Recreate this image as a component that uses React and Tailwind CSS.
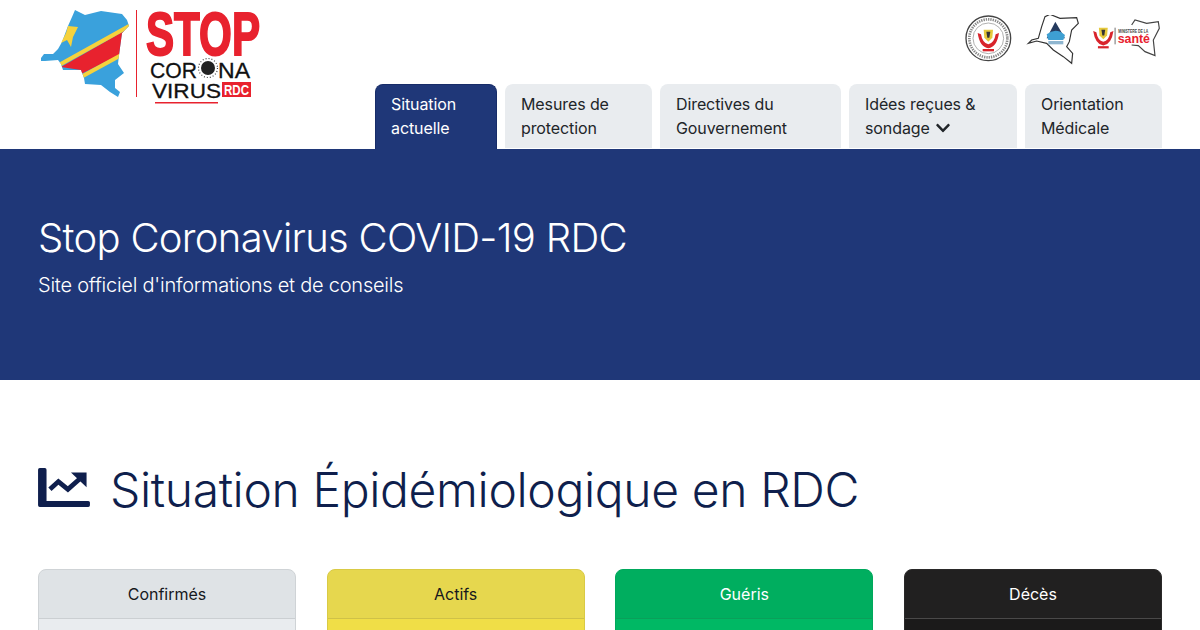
import React from "react";
import { FaChevronDown } from "react-icons/fa";

const MAP = "M6 53 L9 49 L18 49 L23 44 L27 37 L33 21 L37 12 L40 5 L50 10 L66 6 L87 9 L92 15 L94 21 L87 28 L84 50 L83 59 L89 68 L80 75 L80 83 L85 87 L83 92 L75 87 L66 80 L50 79 L49 73 L46 65 L28 65 L26 59 L23 55 L10 56 L6 56 Z";

function MainLogo() {
  return (
    <svg width="230" height="105" viewBox="0 0 230 105" className="block shrink-0" style={{ fontFamily: "'Liberation Sans', sans-serif" }}>
      <defs>
        <clipPath id="drc"><path d={MAP} /></clipPath>
      </defs>
      <path d={MAP} fill="#3aa1dc" />
      <g clipPath="url(#drc)">
        <path d="M26 62 L96 22 L96 44 L46 69 L46 65 Z" fill="#e8222e" />
        <path d="M24 60 L96 20" stroke="#f6d23c" strokeWidth="4" />
        <path d="M46 72 L90 48" stroke="#f6d23c" strokeWidth="4" />
      </g>
      <path d="M33 21 L43 22 L38 32 L36 42 L32 35 L26 38 L31 28 Z" fill="#f6d23c" />
      <rect x="101" y="5" width="1" height="87" fill="#e8222e" />
      <text x="111" y="50" fontSize="61" fontWeight="700" fill="#e8222e" stroke="#e8222e" strokeWidth="2" textLength="114" lengthAdjust="spacingAndGlyphs">STOP</text>
      <text x="115" y="73" fontSize="22" fill="#111" stroke="#111" strokeWidth="0.3" textLength="47" lengthAdjust="spacingAndGlyphs">COR</text>
      <circle cx="173" cy="63" r="7" fill="#222" />
      <circle cx="173" cy="63" r="9.5" fill="none" stroke="#444" strokeWidth="1.2" strokeDasharray="1 2" />
      <text x="183" y="73" fontSize="22" fill="#111" stroke="#111" strokeWidth="0.3" textLength="32" lengthAdjust="spacingAndGlyphs">NA</text>
      <text x="117" y="93" fontSize="21" fill="#111" stroke="#111" strokeWidth="0.3" textLength="69" lengthAdjust="spacingAndGlyphs">VIRUS</text>
      <rect x="187" y="77" width="29" height="15" fill="#e8222e" />
      <text x="189" y="90" fontSize="14" fontWeight="700" fill="#fff" textLength="25" lengthAdjust="spacingAndGlyphs">RDC</text>
      <rect x="120" y="97" width="63" height="1.5" fill="#e8222e" />
    </svg>
  );
}

function Emblem() {
  return (
    <g>
      <path d="M-32 -18 Q-26 24 0 28 Q26 24 32 -18 L22 -14 Q18 12 0 16 Q-18 12 -22 -14 Z" fill="#d8242c" />
      <path d="M-14 -28 L14 -28 L12 -4 L0 8 L-12 -4 Z" fill="#e6c93c" />
      <path d="M-6 -22 L6 -22 L3 -4 L-3 -4 Z" fill="#333" />
      <rect x="-17" y="30" width="34" height="7" fill="#d8242c" />
    </g>
  );
}

function PartnerLogos() {
  return (
    <svg width="200" height="60" viewBox="0 0 200 60" className="block shrink-0" style={{ fontFamily: "'Liberation Sans', sans-serif" }}>
      <g transform="translate(-14 -10) scale(0.3333)">
        <circle cx="115" cy="100" r="67" fill="#fff" stroke="#444" strokeWidth="4" />
        <circle cx="115" cy="100" r="57" fill="none" stroke="#888" strokeWidth="8" strokeDasharray="4 3" />
        <circle cx="115" cy="100" r="46" fill="none" stroke="#888" strokeWidth="2" />
        <g transform="translate(115 102)"><Emblem /></g>

        <path d="M235 115 L245 105 L265 100 L275 65 L285 35 L300 28 L330 40 L380 38 L385 55 L365 75 L358 110 L350 125 L368 145 L365 175 L340 155 L310 135 L290 115 L260 108 Z" fill="#fff" stroke="#333" strokeWidth="3.5" />
        <path d="M316 50 L345 100 L290 100 Z" fill="#253a5e" />
        <path d="M290 88 Q318 65 345 90 L340 105 L295 105 Z" fill="#3e9fd2" />
        <rect x="295" y="108" width="45" height="10" fill="#8fb6d0" />

        <path d="M545 60 L555 45 L590 55 L625 50 L628 70 L610 105 L615 152 L585 140 L565 122 L545 120" fill="none" stroke="#444" strokeWidth="3.5" />
        <g transform="translate(460 95) scale(0.95)"><Emblem /></g>
        <rect x="494" y="68" width="2.5" height="50" fill="#555" />
        <text x="505" y="83" fontSize="15" fontWeight="700" fill="#444" textLength="90" lengthAdjust="spacingAndGlyphs">MINISTERE DE LA</text>
        <text x="503" y="113" fontSize="40" fontWeight="700" fill="#e8222e" textLength="97" lengthAdjust="spacingAndGlyphs">santé</text>
      </g>
    </svg>
  );
}

function ChartIcon() {
  return (
    <svg width="52" height="39" viewBox="25 25 153 115" className="block shrink-0 mb-[5px]" fill="currentColor">
      <path d="M30 25 H45 Q50 25 50 30 V122 H173 Q178 122 178 127 V135 Q178 140 173 140 H30 Q25 140 25 135 V30 Q25 25 30 25 Z" />
      <path d="M60 88 L85 65 L113 88 L150 55" fill="none" stroke="currentColor" strokeWidth="14" />
      <path d="M122 38 H168 V82 Z" />
    </svg>
  );
}

const TABS = [
  { w: "w-[122px]", a: "Situation", b: "actuelle", active: true },
  { w: "w-[147px]", a: "Mesures de", b: "protection" },
  { w: "w-[181px]", a: "Directives du", b: "Gouvernement" },
  { w: "w-[168px]", a: "Idées reçues &", b: "sondage", chevron: true },
  { w: "w-[137px]", a: "Orientation", b: "Médicale" },
];

const CARDS = [
  { t: "Confirmés", head: "bg-[#dfe3e6] border-[#cfd3d6] text-[#16181d]", body: "bg-[#e9ecef]", line: "border-[#cbcfd2]" },
  { t: "Actifs", head: "bg-[#e6d74e] border-[#d9ca45] text-[#16181d]", body: "bg-[#f0de47]", line: "border-[#cfc148]" },
  { t: "Guéris", head: "bg-[#00ae5f] border-[#00a85c] text-white", body: "bg-[#00b864]", line: "border-[#0a9f5a]" },
  { t: "Décès", head: "bg-[#212020] border-[#2a2929] text-white", body: "bg-[#1b1a1a]", line: "border-[#4a4949]" },
];

export default function App() {
  return (
    <div className="h-[630px] overflow-hidden bg-white font-['Inter','Liberation_Sans',sans-serif]">
      <header className="flex justify-between h-[149px] pl-[35px] pr-[38px]">
        <div className="pt-[5px]"><MainLogo /></div>
        <div className="flex flex-col items-end">
          <div className="pt-[15px] h-[84px] -mr-[2px]"><PartnerLogos /></div>
          <nav className="flex gap-2 h-[65px]">
            {TABS.map((tab) => (
              <a
                key={tab.a}
                className={`${tab.w} rounded-t-[8px] pl-4 pt-2 text-[16px] leading-6 tracking-[-0.1px] ${
                  tab.active ? "h-[65px] bg-[#1f3778] text-white border-t border-x border-[#172c68] pl-[15px] pt-[7px]" : "h-[64px] bg-[#e9ecef] text-[#212529]"
                }`}
              >
                <div>{tab.a}</div>
                <div className="flex items-center gap-[5px]">
                  {tab.b}
                  {tab.chevron && <FaChevronDown className="text-[16px]" />}
                </div>
              </a>
            ))}
          </nav>
        </div>
      </header>

      <section className="h-[231px] bg-[#1f3778] text-white px-[38px] pt-[63px]">
        <h1 className="text-[40px] leading-[52px] font-light tracking-[-0.7px]">Stop Coronavirus COVID-19 RDC</h1>
        <p className="mt-[6px] text-[20px] leading-[30px] font-light tracking-[-0.23px]">Site officiel d'informations et de conseils</p>
      </section>

      <section className="px-[38px] pt-[80px]">
        <div className="flex items-center gap-[20px] h-[60px] text-[#0f1f4d]">
          <ChartIcon />
          <h2 className="text-[48px] leading-[60px] font-light tracking-[-0.37px]">Situation Épidémiologique en RDC</h2>
        </div>
        <div className="grid grid-cols-4 gap-[30.67px] mt-[49px]">
          {CARDS.map((c) => (
            <div key={c.t} className={`rounded-[8px] overflow-hidden border ${c.head}`}>
              <div className={`h-[49px] flex items-center justify-center border-b text-[16px] ${c.line}`}>{c.t}</div>
              <div className={`h-[60px] ${c.body}`} />
            </div>
          ))}
        </div>
      </section>
    </div>
  );
}
